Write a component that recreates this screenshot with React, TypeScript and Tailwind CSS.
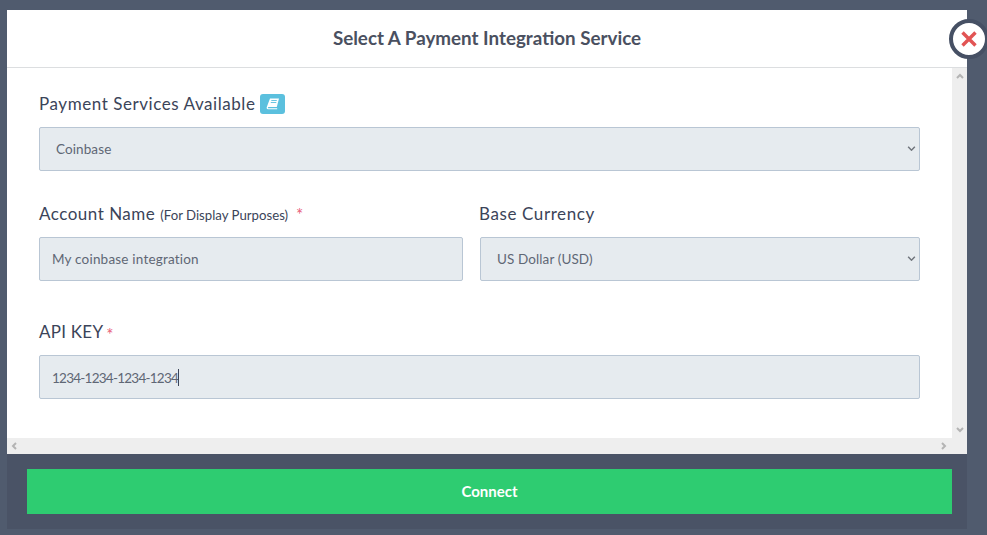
function Chevron({ d }: { d: string }) {
  return (
    <svg viewBox="0 0 8 8" className="w-2 h-2 text-[#b4b4b4]" fill="none" stroke="currentColor" strokeWidth="2">
      <path d={d} />
    </svg>
  );
}

function Star({ className }: { className: string }) {
  return <span className={`text-[#e8607a] font-normal ${className}`}>*</span>;
}

const fieldClass =
  "h-11 w-full rounded-[2px] border border-[#b9c6d4] bg-[#e6ebef] text-[13.5px] text-[#5f6775] outline-none";

function Select({ value, className, inner }: { value: string; className: string; inner?: string }) {
  return (
    <div className={`relative ${className}`}>
      <select defaultValue={value} className={`${fieldClass} appearance-none pl-4 pr-8 tracking-[0.1px] ${inner ?? ""}`}>
        <option>{value}</option>
      </select>
      <svg
        viewBox="0 0 10 6"
        className="absolute right-[4px] top-[19px] h-[5px] w-[9px]"
        fill="none"
        stroke="#70757c"
        strokeWidth="1.8"
      >
        <path d="M1 1l4 4 4-4" />
      </svg>
    </div>
  );
}

export default function App() {
  return (
    <div
      className="relative h-[535px] w-[987px] overflow-hidden bg-[#505b6e] pl-[7px] pt-[10px] text-[#3b4459]"
      style={{ fontFamily: "Lato, 'Open Sans', sans-serif" }}
    >
      <div className="flex h-[519px] w-[960px] flex-col">
        <div className="flex h-[58px] shrink-0 items-center justify-center border-b border-[#dcdee0] bg-white text-[18.8px] font-bold text-[#4a5060]">
          Select A Payment Integration Service
        </div>

        <div className="flex h-[386px] shrink-0 flex-col bg-[#eeeeee]">
          <div className="flex h-[370px] shrink-0">
            <div className="w-[945px] bg-white pl-8 pr-8 pt-[25px]">
              <label className="flex h-[21px] items-center gap-[5px] text-[17px] tracking-[0.56px]">
                Payment Services Available
                <span className="flex h-[20px] w-[25px] items-center justify-center rounded-[3px] bg-[#5bc0de]">
                  <svg viewBox="0 0 14 12" className="h-[12px] w-[14px]" fill="white">
                    <path d="M4 0.5h9l-2.2 8.6H2.6c-.7 0-1 .9-.3 1.2h8.9v.9H2C.7 11.200.4 9.800.9 8.700z" />
                    <path d="M5.300 2.500h5.500M4.800 4.500h5.500" stroke="#5bc0de" strokeWidth="0.9" />
                  </svg>
                </span>
              </label>
              <Select value="Coinbase" className="mt-[13px]" />

              <div className="mt-[32px] flex gap-[17px]">
                <div className="w-[424px]">
                  <label className="flex h-[21px] items-baseline text-[17px] leading-[21px] tracking-[0.5px]">
                    Account Name
                    <span className="ml-[5px] text-[13.2px] tracking-normal">(For Display Purposes)</span>
                    <Star className="ml-[8px] translate-y-px text-[17px]" />
                  </label>
                  <input
                    readOnly
                    value="My coinbase integration"
                    className={`${fieldClass} mt-[13px] px-3 tracking-[0.2px]`}
                  />
                </div>
                <div className="w-[440px]">
                  <label className="-ml-px block h-[21px] text-[17px] leading-[21px] tracking-[0.6px]">
                    Base Currency
                  </label>
                  <Select value="US Dollar (USD)" className="mt-[13px]" inner="pt-px" />
                </div>
              </div>

              <label className="mt-[40px] flex h-[21px] items-baseline text-[17px] leading-[21px] tracking-[0.25px]">
                API KEY
                <Star className="ml-[3px] translate-y-[3px] text-[17px]" />
              </label>
              <div className="relative mt-[13px]">
                <input
                  readOnly
                  value="1234-1234-1234-1234"
                  className={`${fieldClass} px-3 pt-px tracking-[-0.75px]`}
                />
                <span className="absolute left-[139px] top-[14px] h-[17px] w-px bg-[#3b4459]" />
              </div>
            </div>

            <div className="flex w-[15px] flex-col items-center justify-between py-1">
              <Chevron d="M1 6l3-3 3 3" />
              <Chevron d="M1 2l3 3 3-3" />
            </div>
          </div>

          <div className="flex h-4 items-center justify-between pl-[3px] pr-[19px]">
            <Chevron d="M6 1L3 4l3 3" />
            <Chevron d="M2 1l3 3-3 3" />
          </div>
        </div>

        <div className="h-[75px] bg-[#4a5366] pl-5 pr-[15px] pt-[15px]">
          <button className="h-[45px] w-full bg-[#2ecc71] text-[15px] font-bold text-white">Connect</button>
        </div>
      </div>

      <button className="absolute left-[949px] top-[19px] flex h-[40px] w-[40px] items-center justify-center rounded-full border-[4px] border-[#465064] bg-white">
        <svg viewBox="0 0 16 16" className="-ml-px h-4 w-4" fill="none" stroke="#e25454" strokeWidth="3.4">
          <path d="M1.500 1.500l13 13M14.500 1.500l-13 13" />
        </svg>
      </button>
    </div>
  );
}
